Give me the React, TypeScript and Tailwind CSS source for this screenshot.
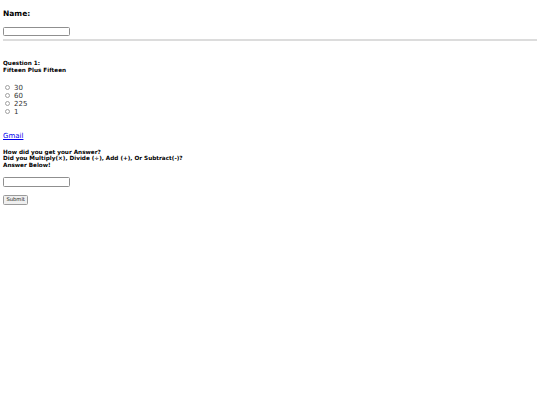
export default function App() {
	const options = ["30", "60", "225", "1"];

	return (
		<div className="w-[540px] h-[405px] bg-white px-[3px] text-black font-['DejaVu_Sans',sans-serif]">
			<h4 className="pt-[9px] text-[7.5px] leading-[9px] font-bold">Name:</h4>
			<input
				type="text"
				className="mt-[9px] block w-[67px] h-[9px] border border-[#8f8f8f] rounded-[1.5px] bg-white"
			/>
			<hr className="mt-[3px] border-0 h-[1.5px] bg-[#dcdcdc]" />

			<h5 className="mt-[19px] text-[5.7px] leading-[7px] font-bold">
				Question 1:
				<br />
				Fifteen Plus Fifteen
			</h5>

			<div className="mt-[10px] flex flex-col">
				{options.map(option => (
					<label key={option} className="flex items-center h-[8px] text-[7px] leading-[8px] text-[#333]">
						<span className="ml-[2px] mr-[4px] w-[5px] h-[5px] rounded-full border border-[#a0a0a0]" />
						{option}
					</label>
				))}
			</div>

			<a href="#" className="mt-[16px] block w-fit text-[7px] leading-[9px] text-[#0000ee] underline">
				Gmail
			</a>

			<h5 className="mt-[8px] text-[5.7px] leading-[6.5px] font-bold">
				How did you get your Answer?
				<br />
				Did you Multiply(×), Divide (÷), Add (+), Or Subtract(-)?
				<br />
				Answer Below!
			</h5>

			<input
				type="text"
				className="mt-[9px] block w-[67px] h-[9.5px] border border-[#8f8f8f] rounded-[1.5px] bg-white"
			/>

			<button className="mt-[8.5px] block h-[9.5px] px-[2.5px] text-[5.2px] leading-[7px] bg-[#efefef] border border-[#9a9a9a] rounded-[1.5px] text-[#222]">
				Submit
			</button>
		</div>
	);
}
